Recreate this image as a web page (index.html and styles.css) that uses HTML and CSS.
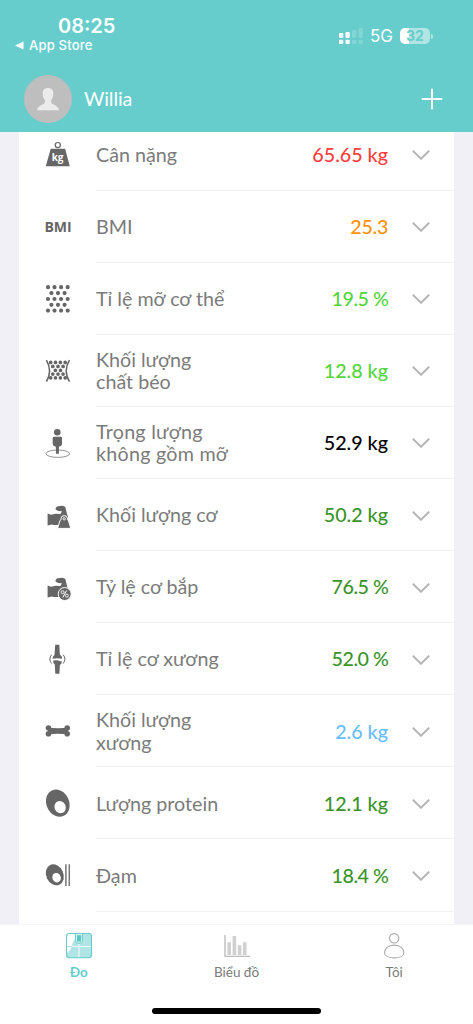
FILE: index.html
```
<!DOCTYPE html>
<html lang="vi">
<head>
<meta charset="utf-8">
<title>Đo</title>
<link rel="stylesheet" href="styles.css">
</head>
<body>
<div class="app">
  <header class="header">
    <div class="status">
      <div class="status-left">
        <div class="time">08:25</div>
        <div class="back"><svg width="9" height="9" viewBox="0 0 9 9"><path d="M0 4.5 8.5.5v8z" fill="#fff"/></svg><span>App Store</span></div>
      </div>
      <div class="status-right">
        <svg width="24" height="16" viewBox="0 0 24 16" fill="#fff"><rect x="0" y="5" width="4.3" height="5" rx="1.3"/><rect x="6.5" y="4" width="4.3" height="6" rx="1.3"/><rect x="0" y="11.8" width="4.3" height="4.2" rx="1.3"/><rect x="6.5" y="11.8" width="4.3" height="4.2" rx="1.3"/><g opacity=".18"><rect x="13" y="2" width="4.3" height="8" rx="1.3"/><rect x="19.5" y="0" width="4.3" height="10" rx="1.3"/><rect x="13" y="11.8" width="4.3" height="4.2" rx="1.3"/><rect x="19.5" y="11.8" width="4.3" height="4.2" rx="1.3"/></g></svg>
        <span class="net">5G</span>
        <span class="battery">32</span><span class="battery-cap"></span>
      </div>
    </div>
    <div class="profile">
      <svg class="avatar" width="48" height="48" viewBox="0 0 48 48"><circle cx="24" cy="24" r="24" fill="#bebebe"/><path d="M24 13c3.6 0 5.3 2.1 5.3 5.2 0 2.8-.6 5.3-2.1 7v2.3c.6 2.3 7.5 2.6 7.7 7.7H13.2c.2-5.1 7.1-5.4 7.7-7.7v-2.3c-1.5-1.7-2.2-4.2-2.2-7 0-3.1 1.7-5.2 5.3-5.2z" fill="#ebebeb"/></svg>
      <span class="name">Willia</span>
      <svg class="plus" width="22" height="22" viewBox="0 0 22 22"><path d="M11 .8v20.4M.8 11h20.4" stroke="#fff" stroke-width="2"/></svg>
    </div>
  </header>

  <main class="content">
    <ul class="card">
      <li class="row">
        <svg class="icon" viewBox="0 0 36 36"><circle cx="17.8" cy="8.1" r="2.6" fill="none" stroke="#666" stroke-width="1.2"/><path d="M10.7 11.7h14.4l4.7 17.5H5.8z" fill="#666"/><text x="17.6" y="23.8" class="kg">kg</text></svg>
        <div class="body"><span class="label">Cân nặng</span><span class="value red">65.65 kg</span><svg class="chev" viewBox="0 0 18 10"><path d="m.8.8 8.2 8 8.2-8"/></svg></div>
      </li>
      <li class="row">
        <span class="icon bmi">BMI</span>
        <div class="body"><span class="label">BMI</span><span class="value orange">25.3</span><svg class="chev" viewBox="0 0 18 10"><path d="m.8.8 8.2 8 8.2-8"/></svg></div>
      </li>
      <li class="row">
        <svg class="icon" viewBox="0 0 36 36"><g class="dots dots-lg"><path d="M8 6.2h0M14.5 6.2h0M21.1 6.2h0M27.7 6.2h0M11.4 12.1h0M18 12.1h0M24.6 12.1h0M8 18h0M14.5 18h0M21.1 18h0M27.7 18h0M11.4 23.8h0M18 23.8h0M24.6 23.8h0M8 29.6h0M14.5 29.6h0M21.1 29.6h0M27.7 29.6h0"/></g></svg>
        <div class="body"><span class="label">Tỉ lệ mỡ cơ thể</span><span class="value percent lime">19.5 %</span><svg class="chev" viewBox="0 0 18 10"><path d="m.8.8 8.2 8 8.2-8"/></svg></div>
      </li>
      <li class="row">
        <svg class="icon" viewBox="0 0 36 36"><g class="dots dots-sm"><path d="M10.7 9.4h0M15.5 9.4h0M20.4 9.4h0M25.2 9.4h0M12.8 13.4h0M18 13.4h0M23.1 13.4h0M15.4 17.3h0M20.5 17.3h0M12.8 21.1h0M18 21.1h0M23.1 21.1h0M10.7 24.8h0M15.5 24.8h0M20.4 24.8h0M25.2 24.8h0"/></g><path d="M6.4 7.1q6.4 10.8 0 21.6M29.4 7.1q-6.4 10.8 0 21.6" fill="none" stroke="#666" stroke-width="1.6"/></svg>
        <div class="body"><span class="label">Khối lượng<br>chất béo</span><span class="value lime">12.8 kg</span><svg class="chev" viewBox="0 0 18 10"><path d="m.8.8 8.2 8 8.2-8"/></svg></div>
      </li>
      <li class="row">
        <svg class="icon" viewBox="0 0 36 36"><ellipse cx="17.8" cy="28.7" rx="11.8" ry="3.7" fill="none" stroke="#666" stroke-width=".7"/><circle cx="17.3" cy="7.2" r="3.3" fill="#666"/><path d="M14.2 11.7h6.4q1.4 0 1.4 1.4v6.2q0 1.2-1.8 2l-1.3.5v6.9h-3v-6.9l-1.4-.5q-1.8-.8-1.8-2v-6.2q0-1.4 1.5-1.4z" fill="#666"/></svg>
        <div class="body"><span class="label wide">Trọng lượng<br>không gồm mỡ</span><span class="value black">52.9 kg</span><svg class="chev" viewBox="0 0 18 10"><path d="m.8.8 8.2 8 8.2-8"/></svg></div>
      </li>
      <li class="row">
        <svg class="icon" viewBox="0 0 36 36"><path class="arm" d="M7.6 16.6 11 17.8 15.8 16.7 20.5 17 22 14.3 18.1 14.1 15.6 12.4Q15 10 18 9.2 22.6 7.9 25.4 10 26.3 15 28 20L28 28H17Q13.9 28.2 11.5 27.4L7.6 28.5z"/><path d="M21 22.8V21.3Q21.3 18.6 24.2 18.6T27.4 21.3V22.8L28.4 23.4 30.8 31.4H17.6L20 23.4z" fill="#666" stroke="#fff" stroke-width="1"/><circle cx="24.2" cy="21.8" r="1.2" fill="none" stroke="#fff" stroke-width=".9"/></svg>
        <div class="body"><span class="label">Khối lượng cơ</span><span class="value green">50.2 kg</span><svg class="chev" viewBox="0 0 18 10"><path d="m.8.8 8.2 8 8.2-8"/></svg></div>
      </li>
      <li class="row">
        <svg class="icon" viewBox="0 0 36 36"><path class="arm" d="M7.6 16.6 11 17.8 15.8 16.7 20.5 17 22 14.3 18.1 14.1 15.6 12.4Q15 10 18 9.2 22.6 7.9 25.4 10 26.3 15 28 20L26 28H17Q13.9 28.2 11.5 27.4L7.6 28.5z"/><circle cx="24.7" cy="25" r="6.5" fill="#666" stroke="#fff" stroke-width="1"/><path d="m26.6 21.5-3.8 7" stroke="#fff" stroke-width="1"/><circle cx="22.6" cy="23.2" r="1.5" class="pct"/><circle cx="26.9" cy="26.7" r="1.5" class="pct"/></svg>
        <div class="body"><span class="label">Tỷ lệ cơ bắp</span><span class="value percent green">76.5 %</span><svg class="chev" viewBox="0 0 18 10"><path d="m.8.8 8.2 8 8.2-8"/></svg></div>
      </li>
      <li class="row">
        <svg class="icon" viewBox="0 0 36 36"><path d="M15.2 3.7h4.1l.5 9.7 2 2.2v2.2l-4.2-.5-4.9.5q-.4-2.2 1.8-3.8zM13.1 19.5l3.9-.2 4.8 1.2q.2 2.2-1.9 3.6l-.5 8.6h-4.1l-.5-9.1q-1.9-1.2-1.7-4.1z" fill="#666"/><path d="M11.6 13.7q-3.5 4.4 0 8.8M23.2 13.7q3.5 4.4 0 8.8" fill="none" stroke="#666" stroke-width="1"/></svg>
        <div class="body"><span class="label">Tỉ lệ cơ xương</span><span class="value percent green">52.0 %</span><svg class="chev" viewBox="0 0 18 10"><path d="m.8.8 8.2 8 8.2-8"/></svg></div>
      </li>
      <li class="row">
        <svg class="icon" viewBox="0 0 36 36"><g fill="#666"><path d="M8 15.1h4.2q5.8.2 11.4 0h4.2v5.8h-4.2q-5.7-.3-11.4 0H8z"/><circle cx="8.5" cy="15" r="2.8"/><circle cx="8.5" cy="20.7" r="2.8"/><circle cx="27.2" cy="15" r="2.8"/><circle cx="27.2" cy="20.7" r="2.8"/></g></svg>
        <div class="body"><span class="label">Khối lượng<br>xương</span><span class="value blue">2.6 kg</span><svg class="chev" viewBox="0 0 18 10"><path d="m.8.8 8.2 8 8.2-8"/></svg></div>
      </li>
      <li class="row">
        <svg class="icon" viewBox="0 0 36 36"><ellipse cx="17.8" cy="18.1" rx="11.3" ry="14" fill="#666" transform="rotate(-25 17.8 18.1)"/><ellipse cx="20.1" cy="22.2" rx="5.6" ry="6.2" fill="#fff" transform="rotate(-25 20.1 22.2)"/></svg>
        <div class="body"><span class="label">Lượng protein</span><span class="value green">12.1 kg</span><svg class="chev" viewBox="0 0 18 10"><path d="m.8.8 8.2 8 8.2-8"/></svg></div>
      </li>
      <li class="row">
        <svg class="icon" viewBox="0 0 36 36"><ellipse cx="14.8" cy="17.8" rx="8.6" ry="10.9" fill="#666" transform="rotate(-25 14.8 17.8)"/><ellipse cx="16.6" cy="20.7" rx="4.2" ry="4.8" fill="#fff" transform="rotate(-25 16.6 20.7)"/><path d="M25.9 7.2v21.7M29.3 7.2v21.7" stroke="#777" stroke-width="1.5"/></svg>
        <div class="body"><span class="label">Đạm</span><span class="value percent green">18.4 %</span><svg class="chev" viewBox="0 0 18 10"><path d="m.8.8 8.2 8 8.2-8"/></svg></div>
      </li>
    </ul>
  </main>

  <nav class="tabs">
    <div class="tab active">
      <svg width="28" height="28" viewBox="0 0 28 28"><rect x="1.5" y="1.5" width="25" height="24.5" rx="3" fill="#b1e4e4"/><path d="M2 3.5q0-1.5 1.5-1.5h7v4.5Q7.5 9 7 14q-1 4-5 7z" fill="#fff"/><path d="M14 12v13.5M2 14.5h24" stroke="#fff" stroke-width="1.2" opacity=".75"/><path d="M2 14.5h5" stroke="#b1e4e4" stroke-width="1.2"/><rect x="1.5" y="1.5" width="25" height="24.3" rx="3" fill="none" stroke="#66cdcc" stroke-width="1.1"/><path d="M10.5 1.5v7.2q0 2.6 3.5 2.6t3.5-2.6V1.5z" fill="#d9f3f2" stroke="#66cdcc" stroke-width=".9"/><rect x="12" y="3.2" width="4.1" height="6.3" fill="#55c8c6"/></svg>
      <span>Đo</span>
    </div>
    <div class="tab">
      <svg width="28" height="28" viewBox="0 0 28 28"><path d="M2 3v21.2h25" fill="none" stroke="#aaa" stroke-width="1.1"/><path d="M6.2 10.3V23M11.4 4V23M16.6 13.3V23M21.7 10.3V23" stroke="#d0d0d0" stroke-width="3.6"/></svg>
      <span>Biểu đồ</span>
    </div>
    <div class="tab">
      <svg width="28" height="28" viewBox="0 0 28 28" fill="none" stroke="#aaa" stroke-width="1.1"><circle cx="14.2" cy="6.3" r="4.7"/><path d="M14.2 13.1c6.3 0 9.6 3.7 9.6 7.8 0 3.2-4.3 5-9.6 5s-9.6-1.8-9.6-5c0-4.1 3.3-7.8 9.6-7.8z"/></svg>
      <span>Tôi</span>
    </div>
  </nav>
  <div class="home"></div>
</div>
</body>
</html>
```
FILE: styles.css
```
* { box-sizing: border-box; }
body { margin: 0; font-family: Lato, "Noto Sans", sans-serif; background: #fff; }
svg { display: block; flex: none; }
.app { width: 473px; height: 1024px; display: flex; flex-direction: column; overflow: hidden; }

.header { height: 132px; flex: none; background: #66cdcc; color: #fff; display: flex; flex-direction: column; }
.status { height: 75px; flex: none; display: flex; justify-content: space-between; font-family: Inter, sans-serif; }
.status-left { padding: 15px 0 0 15px; }
.time { font-size: 20px; line-height: 23px; font-weight: 600; padding-left: 43px; }
.back { display: flex; align-items: center; gap: 5px; font-size: 13px; line-height: 14px; font-weight: 500; letter-spacing: .2px; }
.status-right { display: flex; align-items: center; height: 20px; margin: 26px 40px 0 0; }
.net { font-size: 17px; line-height: 20px; margin: 0 7px 0 7px; }
.battery { width: 30px; height: 16px; border-radius: 5px; background: linear-gradient(90deg, #fff 9.5px, #b1e5e4 9.5px); color: #66cdcc; font-size: 14px; line-height: 16px; font-weight: 700; text-align: center; }
.battery-cap { width: 2px; height: 5px; margin-left: 1px; border-radius: 0 2px 2px 0; background: #b1e5e4; }
.profile { display: flex; align-items: center; height: 48px; padding: 0 30px 0 24px; }
.avatar { margin-top: -1px; }
.plus { margin-top: -1px; }
.name { margin-left: 12px; flex: 1; font-size: 19.7px; line-height: 24px; letter-spacing: -.1px; }

.content { flex: 1; min-height: 0; overflow: hidden; background: #f0f0f6; padding: 0 19px; display: flex; flex-direction: column; border-bottom: 1px solid #f5f5f8; }
.card { flex: 1; margin: 0; padding: 0; list-style: none; background: #fff; width: 435px; }
.row { display: flex; height: 72.1px; padding-left: 21px; }
.row:first-child { height: 58.6px; }
.row:first-child .icon { margin-top: 4.6px; }
.row:first-child .body { padding-bottom: 12px; padding-top: 1px; }
.icon { width: 36px; height: 36px; margin: 18px 20px 0 0; flex: none; }
.bmi { font: 700 14px/36px "Open Sans", sans-serif; color: #666; text-align: center; }
.kg { font: 700 10px "Open Sans", sans-serif; fill: #fff; text-anchor: middle; }
.dots { fill: none; stroke: #666; stroke-linecap: round; }
.dots-lg { stroke-width: 4.2; }
.dots-sm { stroke-width: 3.7; }
.arm { fill: #666; }
.pct { fill: none; stroke: #fff; stroke-width: .9; }
.body { flex: 1; display: flex; align-items: center; border-bottom: 1px solid #f2f2f5; padding: 2px 24px 0 0; }
.label { flex: 1; color: #7b7b7b; font-size: 19.7px; line-height: 22.5px; letter-spacing: 0; white-space: nowrap; }
.wide { letter-spacing: .25px; }
.value { font-size: 19.7px; line-height: 22.5px; font-weight: 500; white-space: nowrap; margin-right: 24px; }
.percent { letter-spacing: -.45px; margin-right: 23.5px; }
.red { color: #fa3f3f; }
.orange { color: #ff9307; letter-spacing: -.3px; }
.lime { color: #53d53b; }
.black { color: #000; }
.green { color: #3b942b; }
.blue { color: #69bdf8; }
.chev { width: 18px; height: 10px; fill: none; stroke: #b5b5b5; stroke-width: 1.9; }

.tabs { height: 83px; flex: none; display: flex; background: #fff; padding-top: 7px; }
.tab { flex: 1; display: flex; flex-direction: column; align-items: center; color: #7b7b7b; font-size: 13.5px; line-height: 18px; gap: 3px; }
.active { color: #66cdcc; font-weight: 700; }
.home { width: 169px; height: 6px; border-radius: 3px; background: #000; margin: 0 auto 10px; flex: none; }
```
